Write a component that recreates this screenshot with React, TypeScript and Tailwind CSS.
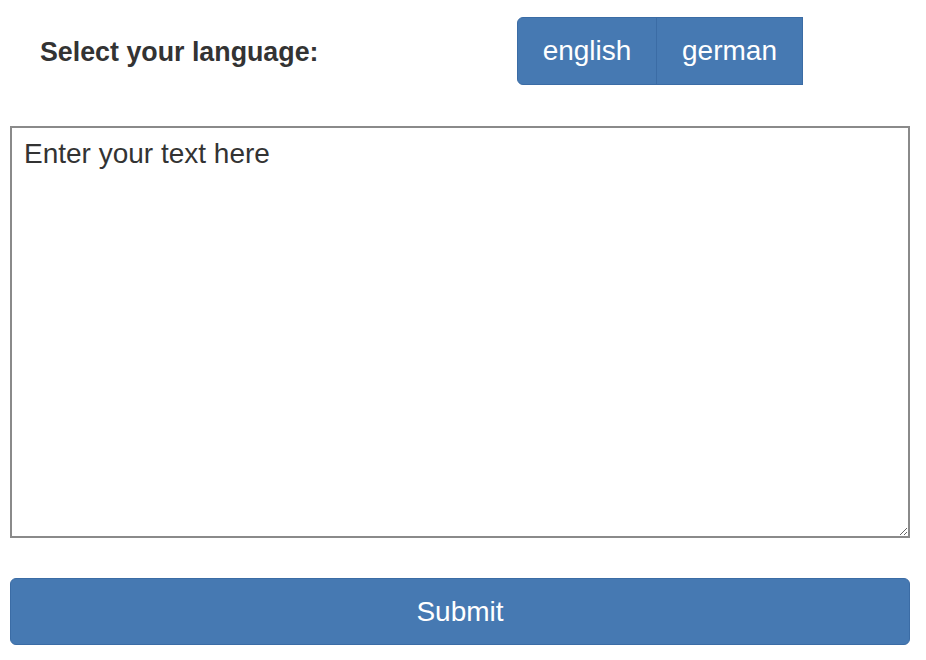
export default function App() {
  return (
    <div className="px-[10px] pt-[17px] font-['Liberation_Sans',Arial,sans-serif] text-[#333]">
      <div className="flex items-center h-[68px]">
        <label className="w-[507px] pl-[30px] pt-[2px] text-[26.8px] font-bold">Select your language:</label>
        <div className="flex h-[68px]">
          <button className="h-full w-[140px] rounded-l-[6px] border border-[#3b6ca5] bg-[#4679b2] text-[28px] text-white">
            english
          </button>
          <button className="h-full w-[147px] -ml-px border border-[#3b6ca5] bg-[#4679b2] text-[28px] text-white">
            german
          </button>
        </div>
      </div>
      <textarea
        className="mt-[41px] block w-[900px] h-[412px] border-2 border-[#8a8a8a] pl-3 pt-[6px] text-[28px] leading-[40px] text-[#333] placeholder:text-[#333] outline-none"
        placeholder="Enter your text here"
      />
      <button className="mt-[40px] block w-[900px] h-[67px] rounded-[6px] border border-[#3b6ca5] bg-[#4679b2] text-[28px] text-white">
        Submit
      </button>
    </div>
  );
}
